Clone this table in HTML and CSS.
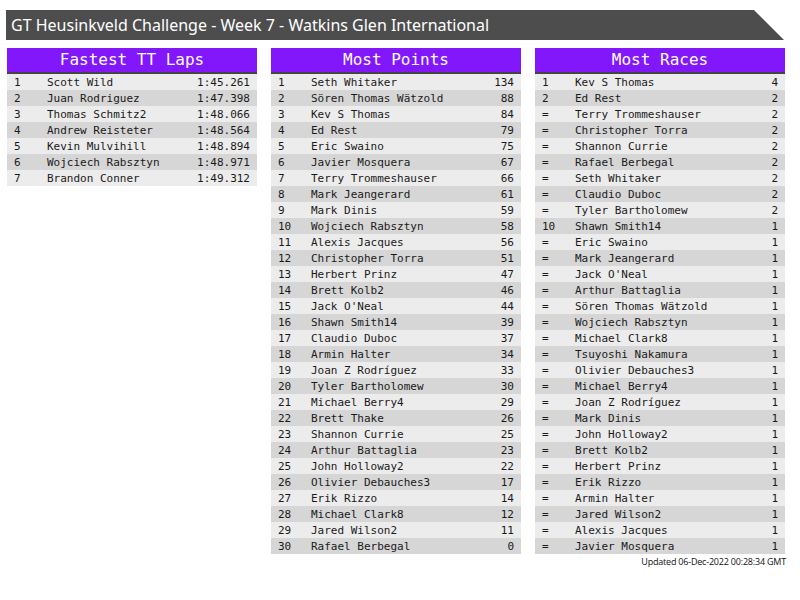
FILE: index.html
```html
<!DOCTYPE html>
<html>
<head>
<meta charset="utf-8">
<link rel="stylesheet" href="styles.css">
</head>
<body>
<div class="title">GT Heusinkveld Challenge - Week 7 - Watkins Glen International</div>
<div class="boards">
  <div class="board">
    <div class="head">Fastest TT Laps</div>
    <div class="row"><span class="pos">1</span><span class="name">Scott Wild</span><span class="val">1:45.261</span></div>
    <div class="row"><span class="pos">2</span><span class="name">Juan Rodriguez</span><span class="val">1:47.398</span></div>
    <div class="row"><span class="pos">3</span><span class="name">Thomas Schmitz2</span><span class="val">1:48.066</span></div>
    <div class="row"><span class="pos">4</span><span class="name">Andrew Reisteter</span><span class="val">1:48.564</span></div>
    <div class="row"><span class="pos">5</span><span class="name">Kevin Mulvihill</span><span class="val">1:48.894</span></div>
    <div class="row"><span class="pos">6</span><span class="name">Wojciech Rabsztyn</span><span class="val">1:48.971</span></div>
    <div class="row"><span class="pos">7</span><span class="name">Brandon Conner</span><span class="val">1:49.312</span></div>
  </div>
  <div class="board">
    <div class="head">Most Points</div>
    <div class="row"><span class="pos">1</span><span class="name">Seth Whitaker</span><span class="val">134</span></div>
    <div class="row"><span class="pos">2</span><span class="name">Sören Thomas Wätzold</span><span class="val">88</span></div>
    <div class="row"><span class="pos">3</span><span class="name">Kev S Thomas</span><span class="val">84</span></div>
    <div class="row"><span class="pos">4</span><span class="name">Ed Rest</span><span class="val">79</span></div>
    <div class="row"><span class="pos">5</span><span class="name">Eric Swaino</span><span class="val">75</span></div>
    <div class="row"><span class="pos">6</span><span class="name">Javier Mosquera</span><span class="val">67</span></div>
    <div class="row"><span class="pos">7</span><span class="name">Terry Trommeshauser</span><span class="val">66</span></div>
    <div class="row"><span class="pos">8</span><span class="name">Mark Jeangerard</span><span class="val">61</span></div>
    <div class="row"><span class="pos">9</span><span class="name">Mark Dinis</span><span class="val">59</span></div>
    <div class="row"><span class="pos">10</span><span class="name">Wojciech Rabsztyn</span><span class="val">58</span></div>
    <div class="row"><span class="pos">11</span><span class="name">Alexis Jacques</span><span class="val">56</span></div>
    <div class="row"><span class="pos">12</span><span class="name">Christopher Torra</span><span class="val">51</span></div>
    <div class="row"><span class="pos">13</span><span class="name">Herbert Prinz</span><span class="val">47</span></div>
    <div class="row"><span class="pos">14</span><span class="name">Brett Kolb2</span><span class="val">46</span></div>
    <div class="row"><span class="pos">15</span><span class="name">Jack O'Neal</span><span class="val">44</span></div>
    <div class="row"><span class="pos">16</span><span class="name">Shawn Smith14</span><span class="val">39</span></div>
    <div class="row"><span class="pos">17</span><span class="name">Claudio Duboc</span><span class="val">37</span></div>
    <div class="row"><span class="pos">18</span><span class="name">Armin Halter</span><span class="val">34</span></div>
    <div class="row"><span class="pos">19</span><span class="name">Joan Z Rodríguez</span><span class="val">33</span></div>
    <div class="row"><span class="pos">20</span><span class="name">Tyler Bartholomew</span><span class="val">30</span></div>
    <div class="row"><span class="pos">21</span><span class="name">Michael Berry4</span><span class="val">29</span></div>
    <div class="row"><span class="pos">22</span><span class="name">Brett Thake</span><span class="val">26</span></div>
    <div class="row"><span class="pos">23</span><span class="name">Shannon Currie</span><span class="val">25</span></div>
    <div class="row"><span class="pos">24</span><span class="name">Arthur Battaglia</span><span class="val">23</span></div>
    <div class="row"><span class="pos">25</span><span class="name">John Holloway2</span><span class="val">22</span></div>
    <div class="row"><span class="pos">26</span><span class="name">Olivier Debauches3</span><span class="val">17</span></div>
    <div class="row"><span class="pos">27</span><span class="name">Erik Rizzo</span><span class="val">14</span></div>
    <div class="row"><span class="pos">28</span><span class="name">Michael Clark8</span><span class="val">12</span></div>
    <div class="row"><span class="pos">29</span><span class="name">Jared Wilson2</span><span class="val">11</span></div>
    <div class="row"><span class="pos">30</span><span class="name">Rafael Berbegal</span><span class="val">0</span></div>
  </div>
  <div class="board">
    <div class="head">Most Races</div>
    <div class="row"><span class="pos">1</span><span class="name">Kev S Thomas</span><span class="val">4</span></div>
    <div class="row"><span class="pos">2</span><span class="name">Ed Rest</span><span class="val">2</span></div>
    <div class="row"><span class="pos">=</span><span class="name">Terry Trommeshauser</span><span class="val">2</span></div>
    <div class="row"><span class="pos">=</span><span class="name">Christopher Torra</span><span class="val">2</span></div>
    <div class="row"><span class="pos">=</span><span class="name">Shannon Currie</span><span class="val">2</span></div>
    <div class="row"><span class="pos">=</span><span class="name">Rafael Berbegal</span><span class="val">2</span></div>
    <div class="row"><span class="pos">=</span><span class="name">Seth Whitaker</span><span class="val">2</span></div>
    <div class="row"><span class="pos">=</span><span class="name">Claudio Duboc</span><span class="val">2</span></div>
    <div class="row"><span class="pos">=</span><span class="name">Tyler Bartholomew</span><span class="val">2</span></div>
    <div class="row"><span class="pos">10</span><span class="name">Shawn Smith14</span><span class="val">1</span></div>
    <div class="row"><span class="pos">=</span><span class="name">Eric Swaino</span><span class="val">1</span></div>
    <div class="row"><span class="pos">=</span><span class="name">Mark Jeangerard</span><span class="val">1</span></div>
    <div class="row"><span class="pos">=</span><span class="name">Jack O'Neal</span><span class="val">1</span></div>
    <div class="row"><span class="pos">=</span><span class="name">Arthur Battaglia</span><span class="val">1</span></div>
    <div class="row"><span class="pos">=</span><span class="name">Sören Thomas Wätzold</span><span class="val">1</span></div>
    <div class="row"><span class="pos">=</span><span class="name">Wojciech Rabsztyn</span><span class="val">1</span></div>
    <div class="row"><span class="pos">=</span><span class="name">Michael Clark8</span><span class="val">1</span></div>
    <div class="row"><span class="pos">=</span><span class="name">Tsuyoshi Nakamura</span><span class="val">1</span></div>
    <div class="row"><span class="pos">=</span><span class="name">Olivier Debauches3</span><span class="val">1</span></div>
    <div class="row"><span class="pos">=</span><span class="name">Michael Berry4</span><span class="val">1</span></div>
    <div class="row"><span class="pos">=</span><span class="name">Joan Z Rodríguez</span><span class="val">1</span></div>
    <div class="row"><span class="pos">=</span><span class="name">Mark Dinis</span><span class="val">1</span></div>
    <div class="row"><span class="pos">=</span><span class="name">John Holloway2</span><span class="val">1</span></div>
    <div class="row"><span class="pos">=</span><span class="name">Brett Kolb2</span><span class="val">1</span></div>
    <div class="row"><span class="pos">=</span><span class="name">Herbert Prinz</span><span class="val">1</span></div>
    <div class="row"><span class="pos">=</span><span class="name">Erik Rizzo</span><span class="val">1</span></div>
    <div class="row"><span class="pos">=</span><span class="name">Armin Halter</span><span class="val">1</span></div>
    <div class="row"><span class="pos">=</span><span class="name">Jared Wilson2</span><span class="val">1</span></div>
    <div class="row"><span class="pos">=</span><span class="name">Alexis Jacques</span><span class="val">1</span></div>
    <div class="row"><span class="pos">=</span><span class="name">Javier Mosquera</span><span class="val">1</span></div>
  </div>
</div>
<div class="updated">Updated 06-Dec-2022 00:28:34 GMT</div>
</body>
</html>
```
FILE: styles.css
```css
html, body {
  margin: 0;
  padding: 0;
  background: #ffffff;
}
body {
  padding-top: 10px;
}
.title {
  margin-left: 6px;
  width: 778px;
  height: 30px;
  line-height: 30px;
  padding-left: 5px;
  box-sizing: border-box;
  background: #4d4d4d;
  color: #ffffff;
  font-family: "Noto Sans", sans-serif;
  font-size: 16px;
  clip-path: polygon(0 0, 748px 0, 778px 30px, 0 30px);
  white-space: nowrap;
}
.boards {
  display: flex;
  align-items: flex-start;
  gap: 14px;
  margin-top: 8px;
  margin-left: 7px;
}
.board {
  width: 250px;
  font-family: "DejaVu Sans Mono", monospace;
}
.head {
  height: 24px;
  line-height: 24px;
  background: #8217fb;
  border-bottom: 2px solid #444444;
  color: #ffffff;
  font-size: 16px;
  text-align: center;
}
.row {
  display: flex;
  height: 16px;
  line-height: 17px;
  font-size: 11px;
  color: #1a1a1a;
  background: #ececec;
}
.row:nth-child(odd) {
  background: #d6d6d6;
}
.pos {
  width: 33px;
  padding-left: 7px;
}
.name {
  flex: 1;
  white-space: nowrap;
}
.val {
  padding-right: 7px;
  text-align: right;
}
.updated {
  text-align: right;
  margin-right: 14px;
  margin-top: 2px;
  font-family: "Open Sans", sans-serif;
  font-size: 9px;
  line-height: 12px;
  color: #111111;
  letter-spacing: -0.2px;
}
```
